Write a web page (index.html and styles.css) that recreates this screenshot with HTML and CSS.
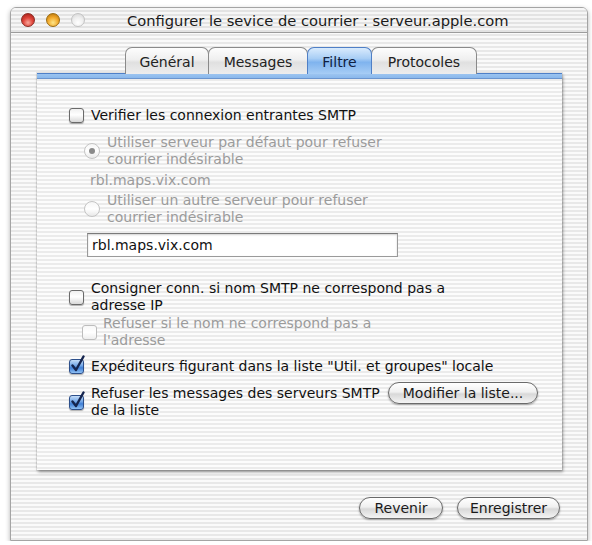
FILE: index.html
```html
<!DOCTYPE html>
<html lang="fr">
<head>
<meta charset="utf-8">
<title>Configurer le sevice de courrier</title>
<link rel="stylesheet" href="styles.css">
</head>
<body>
<div class="window">
  <div class="titlebar">
    <div class="lights">
      <span class="light red"></span>
      <span class="light yellow"></span>
      <span class="light grey"></span>
    </div>
    <div class="title">Configurer le sevice de courrier : serveur.apple.com</div>
  </div>
  <div class="main">
    <div class="tabs">
      <div class="tab tab-gen">Général</div>
      <div class="tab tab-msg">Messages</div>
      <div class="tab tab-fil selected">Filtre</div>
      <div class="tab tab-pro">Protocoles</div>
    </div>
    <div class="panel">
      <div class="band"></div>
      <div class="content">
        <div class="row r1">
          <span class="check"></span>
          <span class="label">Verifier les connexion entrantes SMTP</span>
        </div>
        <div class="row radio-row r2">
          <span class="radio on disabled"></span>
          <span class="label dim">Utiliser serveur par défaut pour refuser<br>courrier indésirable</span>
        </div>
        <div class="plain dim r3">rbl.maps.vix.com</div>
        <div class="row radio-row r4">
          <span class="radio disabled"></span>
          <span class="label dim">Utiliser un autre serveur pour refuser<br>courrier indésirable</span>
        </div>
        <div class="field r5">rbl.maps.vix.com</div>
        <div class="row r6">
          <span class="check"></span>
          <span class="label">Consigner conn. si nom SMTP ne correspond pas a<br>adresse IP</span>
        </div>
        <div class="row sub-row r7">
          <span class="check disabled"></span>
          <span class="label dim">Refuser si le nom ne correspond pas a<br>l'adresse</span>
        </div>
        <div class="row r8">
          <span class="check checked"><svg viewBox="0 0 16 18" width="16" height="18"><path d="M3.5 10.5 L7 15 L14.5 1.5" fill="none" stroke="#15254f" stroke-width="2.4" stroke-linecap="round" stroke-linejoin="round"/></svg></span>
          <span class="label">Expéditeurs figurant dans la liste "Util. et groupes" locale</span>
        </div>
        <div class="row r9">
          <span class="check checked"><svg viewBox="0 0 16 18" width="16" height="18"><path d="M3.5 10.5 L7 15 L14.5 1.5" fill="none" stroke="#15254f" stroke-width="2.4" stroke-linecap="round" stroke-linejoin="round"/></svg></span>
          <span class="label fixed">Refuser les messages des serveurs SMTP<br>de la liste</span>
          <span class="btn btn-mod">Modifier la liste...</span>
        </div>
      </div>
    </div>
    <div class="footer">
      <span class="btn btn-rev">Revenir</span>
      <span class="btn btn-enr">Enregistrer</span>
    </div>
  </div>
</div>
</body>
</html>
```

FILE: styles.css
```css
* { box-sizing: border-box; }

html, body {
  margin: 0;
  padding: 0;
  background: #ffffff;
}

body {
  font-family: "DejaVu Sans", "Lucida Grande", sans-serif;
  font-size: 14px;
  color: #111;
}

.window {
  margin: 7px 0 0 10px;
  width: 578px;
  height: 534px;
  border: 1px solid #a4a4a4;
  border-radius: 6px 6px 0 0;
  background: repeating-linear-gradient(to bottom, #fafafa 0, #fafafa 2px, #e8e8e8 2px, #e8e8e8 4px);
  box-shadow: 0 2px 5px rgba(0,0,0,0.3);
  display: flex;
  flex-direction: column;
  overflow: hidden;
}

.titlebar {
  height: 25px;
  border-bottom: 1px solid #9c9c9c;
  display: flex;
  align-items: center;
  padding-left: 10px;
  background: repeating-linear-gradient(to bottom, #f6f6f6 0, #f6f6f6 2px, #e3e3e3 2px, #e3e3e3 4px);
}

.lights {
  display: flex;
  gap: 11px;
  align-items: center;
}

.light {
  width: 14px;
  height: 14px;
  border-radius: 50%;
  display: block;
}

.light.red {
  background: radial-gradient(circle at 50% 72%, #f8a89c 0, #e0463c 45%, #9c1810 100%);
  border: 1px solid #8a2a22;
}

.light.yellow {
  background: radial-gradient(circle at 50% 72%, #fde68a 0, #f2a92a 50%, #b06c06 100%);
  border: 1px solid #9a6a10;
}

.light.grey {
  background: radial-gradient(circle at 50% 72%, #ffffff 0, #eeeeee 50%, #d2d2d2 100%);
  border: 1px solid #c2c2c2;
}

.title {
  margin-left: 42px;
  font-size: 14.7px;
  color: #1a1a1a;
  white-space: nowrap;
}

.main {
  flex: 1;
  display: flex;
  flex-direction: column;
  padding: 14px 25px 0 26px;
}

.tabs {
  display: flex;
  height: 26px;
  padding-left: 88px;
  position: relative;
  z-index: 1;
}

.tab {
  height: 27px;
  border: 1px solid #8a8a8a;
  border-bottom: none;
  border-radius: 7px 7px 0 0;
  background: linear-gradient(to bottom, #fdfdfd 0%, #efefef 45%, #e0e0e0 55%, #ededed 100%);
  display: flex;
  align-items: center;
  justify-content: center;
  font-size: 14px;
  color: #222;
  margin-right: -1px;
  padding-top: 1px;
}

.tab-gen { width: 84px; }
.tab-msg { width: 100px; }
.tab-fil { width: 65px; }
.tab-pro { width: 106px; }

.tab.selected {
  background: linear-gradient(to bottom, #d9ebfd 0%, #a9cef5 40%, #7fb3ee 55%, #a7cdf5 100%);
  border-color: #4f7fc6;
  color: #102040;
  position: relative;
  z-index: 2;
}

.panel {
  height: 397px;
  background: repeating-linear-gradient(to bottom, #fcfcfc 0, #fcfcfc 2px, #ebebeb 2px, #ebebeb 4px);
  box-shadow: 1px 2px 3px rgba(0,0,0,0.38), 0 0 0 1px rgba(0,0,0,0.08);
  display: flex;
  flex-direction: column;
}

.band {
  height: 6px;
  background: linear-gradient(to bottom, #4f80c8 0, #4f80c8 1px, #9cc4f0 1px, #8ab8ec 5px, #6b95cf 5px);
  flex: none;
}

.content {
  padding-top: 28px;
  display: flex;
  flex-direction: column;
}

.row {
  display: flex;
  align-items: center;
  line-height: 17px;
  white-space: nowrap;
}

.label { display: block; }
.dim { color: #9b9b9b; }

.check {
  width: 15px;
  height: 15px;
  flex: none;
  border: 1px solid #6a6a6a;
  border-radius: 3px;
  background: linear-gradient(to bottom, #f0f0f0 0%, #ffffff 45%, #d8d8d8 100%);
  box-shadow: 0 1px 1px rgba(0,0,0,0.3);
  margin-left: 32px;
  margin-right: 7px;
  position: relative;
}

.check.disabled {
  border-color: #bdbdbd;
  background: linear-gradient(to bottom, #f8f8f8, #ffffff 50%, #eeeeee);
  box-shadow: none;
}

.check.checked {
  border-color: #2d4f8a;
  background: linear-gradient(to bottom, #c4dcf8 0%, #6fa4e6 45%, #3f7fd6 60%, #8fc0f3 100%);
}

.check svg {
  position: absolute;
  left: -1px;
  top: -5px;
}

.radio {
  width: 16px;
  height: 16px;
  flex: none;
  border-radius: 50%;
  border: 1px solid #c4c4c4;
  background: linear-gradient(to bottom, #f6f6f6, #ffffff 50%, #e8e8e8);
  margin-left: 47px;
  margin-right: 7px;
  display: flex;
  align-items: center;
  justify-content: center;
}

.radio.on::after {
  content: "";
  width: 6px;
  height: 6px;
  border-radius: 50%;
  background: #8a8a8a;
}

.r1 { margin-top: 0; }
.r2 { margin-top: 10px; }
.r3 { margin-top: 4px; margin-left: 53px; line-height: 17px; }
.r4 { margin-top: 3px; }
.r5 { margin-top: 7px; }
.r6 { margin-top: 23px; }
.r7 { margin-top: 1px; }
.r8 { margin-top: 9px; }
.r9 { margin-top: 10px; align-items: center; }

.sub-row .check { margin-left: 45px; margin-right: 6px; }

.field {
  margin-left: 50px;
  width: 311px;
  height: 24px;
  border: 1px solid #9a9a9a;
  border-top-color: #7a7a7a;
  background: #ffffff;
  box-shadow: inset 0 1px 2px rgba(0,0,0,0.18);
  padding-left: 4px;
  line-height: 22px;
  color: #111;
}

.label.fixed { width: 293px; }

.btn {
  display: flex;
  align-items: center;
  justify-content: center;
  height: 22px;
  border: 1px solid #6a6a6a;
  border-radius: 11px;
  background: linear-gradient(to bottom, #ffffff 0%, #f0f0f0 45%, #d8d8d8 55%, #f4f4f4 100%);
  box-shadow: 0 1px 2px rgba(0,0,0,0.35);
  color: #1a1a1a;
  font-size: 14px;
  white-space: nowrap;
}

.btn-mod {
  width: 150px;
  align-self: flex-start;
  margin-top: -3px;
  margin-left: 4px;
}

.footer {
  display: flex;
  justify-content: flex-end;
  gap: 14px;
  padding-top: 27px;
  padding-right: 2px;
}

.btn-rev { width: 84px; }
.btn-enr { width: 103px; }
```
